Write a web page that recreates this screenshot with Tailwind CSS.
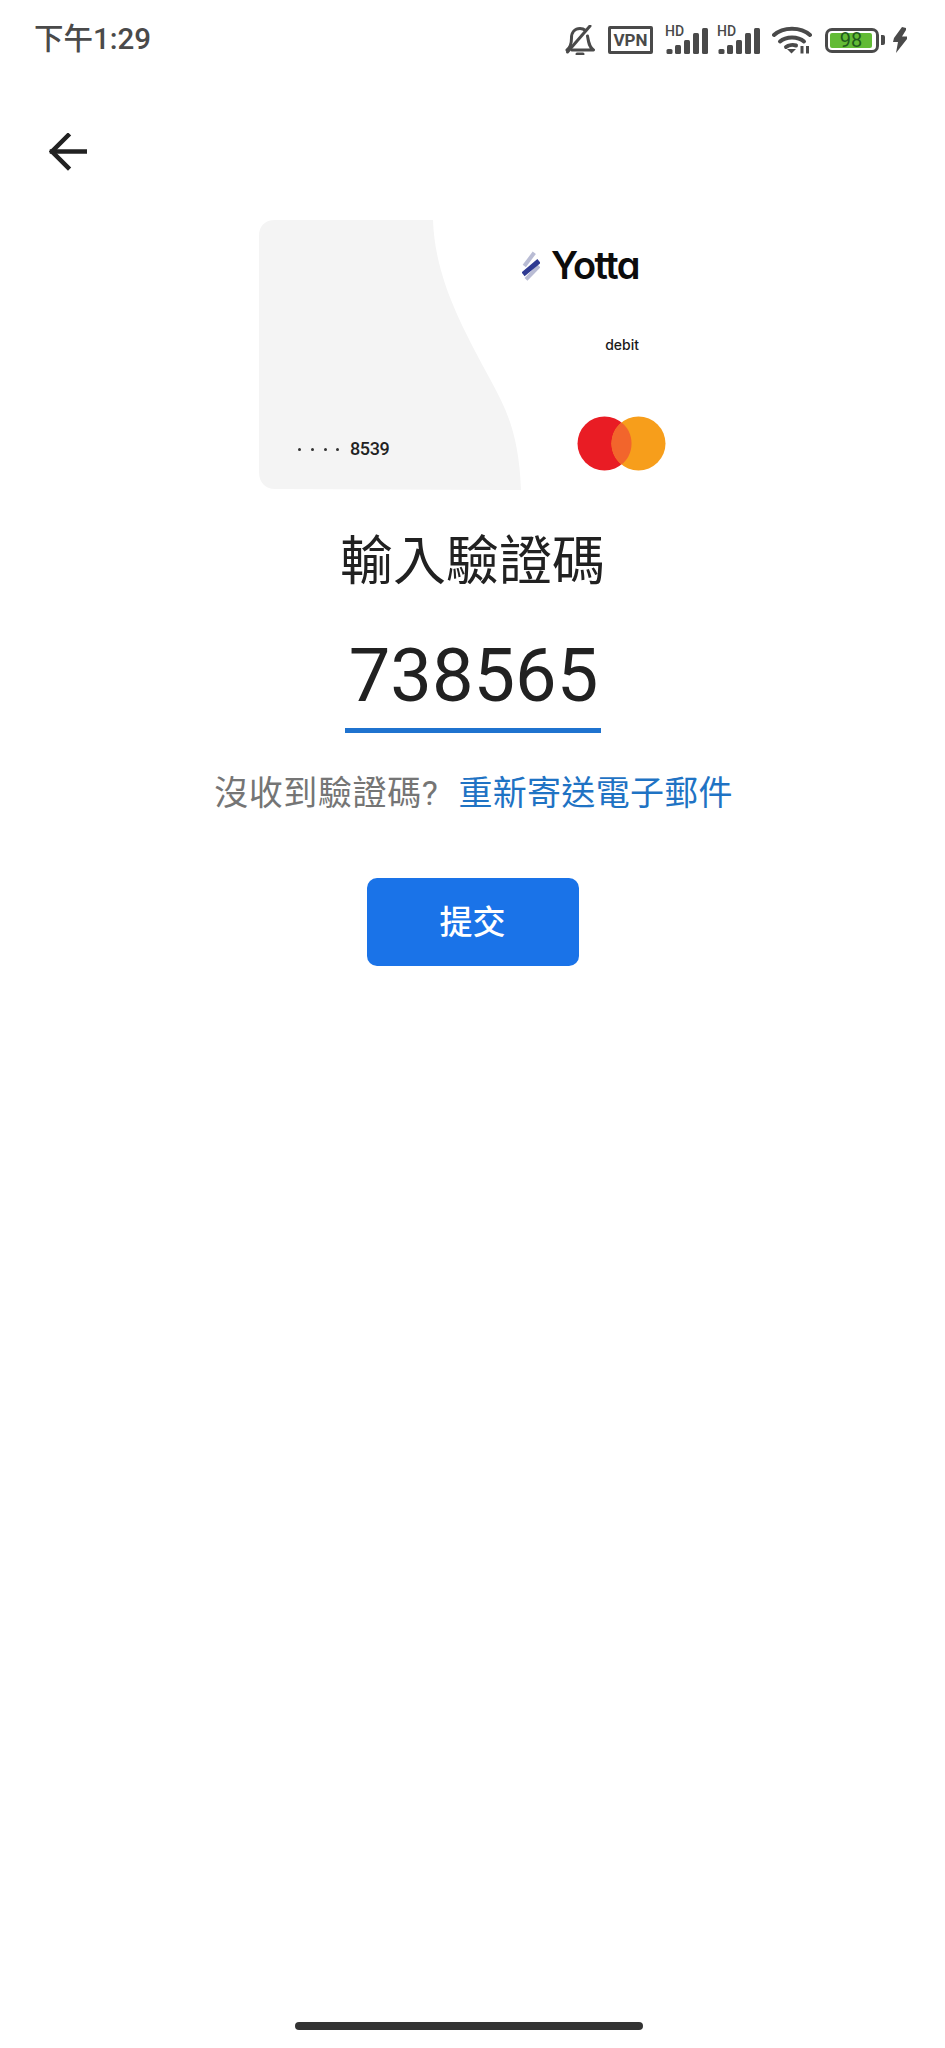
<!DOCTYPE html>
<html lang="zh-Hant">
<head>
    <meta charset="UTF-8">
    <meta name="viewport" content="width=device-width, initial-scale=1.0">
    <title>輸入驗證碼</title>
    <script src="https://cdn.jsdelivr.net/npm/@tailwindcss/browser@4"></script>
</head>
<body class="bg-white">
    <div class="flex flex-col h-[2048px] font-['Roboto','Noto_Sans_CJK_TC',sans-serif]">
        <!-- Status bar -->
        <header class="flex justify-between items-center h-[80px] pl-[34px] pr-[38px] text-[#4a4a4a]">
            <span class="text-[29.500px] leading-none font-medium">下午1:29</span>
            <div class="flex items-center">
                <!-- muted bell -->
                <svg class="w-[30px] h-[30px]" viewBox="0 0 30 30" fill="none" stroke="#4a4a4a" stroke-width="3" stroke-linecap="round" stroke-linejoin="round">
                    <path d="M2 25 C6 22 6.500 18 6.500 13 C6.500 7 10 3.500 15 3.500 C17 3.500 19 4.200 20.500 5.500"/>
                    <path d="M22.500 11 C23.500 17 24 22 28.500 25 H7"/>
                    <path d="M2.500 27 L25 1"/>
                    <path d="M12 29 H18"/>
                </svg>
                <!-- VPN -->
                <div class="ml-[13px] flex items-center justify-center w-[45px] h-[28px] border-[3px] border-[#4a4a4a] rounded-[2px] text-[17px] font-bold leading-none">VPN</div>
                <!-- signal 1 -->
                <div class="relative ml-[12px] w-[43px] h-[28px]">
                    <span class="absolute left-0 top-0 text-[14px] font-medium leading-[11px]">HD</span>
                    <svg class="w-[43px] h-[28px]" viewBox="0 0 43 28" fill="#4a4a4a">
                        <rect x="1.500" y="23" width="6" height="5" rx="1.500"/>
                        <rect x="10" y="19" width="6" height="9" rx="1.500"/>
                        <rect x="19" y="14" width="6" height="14" rx="1.500"/>
                        <rect x="28" y="7" width="6" height="21" rx="1.500"/>
                        <rect x="37" y="2" width="6" height="26" rx="1.500"/>
                    </svg>
                </div>
                <!-- signal 2 -->
                <div class="relative ml-[9px] w-[43px] h-[28px]">
                    <span class="absolute left-0 top-0 text-[14px] font-medium leading-[11px]">HD</span>
                    <svg class="w-[43px] h-[28px]" viewBox="0 0 43 28" fill="#4a4a4a">
                        <rect x="1.500" y="23" width="6" height="5" rx="1.500"/>
                        <rect x="10" y="19" width="6" height="9" rx="1.500"/>
                        <rect x="19" y="14" width="6" height="14" rx="1.500"/>
                        <rect x="28" y="7" width="6" height="21" rx="1.500"/>
                        <rect x="37" y="2" width="6" height="26" rx="1.500"/>
                    </svg>
                </div>
                <!-- wifi -->
                <svg class="ml-[12px] w-[40px] h-[28px]" viewBox="0 0 40 28" fill="none" stroke="#4a4a4a" stroke-width="4" stroke-linecap="round">
                    <path d="M2 9 C11 0.500 29 0.500 38 9"/>
                    <path d="M8 15.500 C14 10 26 10 32 15.500"/>
                    <path d="M14 21 C16.500 19 21 18.500 24 19.500"/>
                    <path d="M15 23 L19.500 27.500 L24 23 Z" fill="#4a4a4a" stroke="none"/>
                    <path d="M30 20 V27.500 M35.500 20 V27.500" stroke-width="3" stroke-linecap="butt"/>
                </svg>
                <!-- battery -->
                <div class="ml-[13px] flex items-center">
                    <div class="w-[54px] h-[25px] border-[3px] border-[#4a4a4a] rounded-[7px] p-[2px]">
                        <div class="flex items-center justify-center h-full w-[42px] bg-[#62bb35] rounded-[2px] text-[20px] leading-none text-[#1f5a1c]">98</div>
                    </div>
                    <div class="ml-[2px] w-[4px] h-[10px] bg-[#4a4a4a] rounded-r-[2px]"></div>
                </div>
                <!-- bolt -->
                <svg class="ml-[8px] w-[14px] h-[26px]" viewBox="0 0 14 26" fill="#4a4a4a">
                    <path d="M9 0 L1 11 L0 15 H5 L3 26 L14 12 V9.500 H9 L13 3 V1 Z"/>
                </svg>
            </div>
        </header>

        <!-- Back arrow -->
        <div class="pt-[53px] pl-[49px]">
            <svg class="w-[38px] h-[38px]" viewBox="0 0 38 38" fill="none" stroke="#212121" stroke-width="4.500" stroke-linecap="square" stroke-linejoin="miter">
                <path d="M36 18.500 H3"/>
                <path d="M19 2.500 L3 18.500 L19 34.500"/>
            </svg>
        </div>

        <!-- Main -->
        <main class="flex flex-col items-center">
            <!-- Card art -->
            <div class="relative mt-[49px] w-[429px] h-[270px]">
                <svg class="absolute left-[1px] top-0 w-[262px] h-[270px]" viewBox="0 0 262 270" fill="#f4f4f4">
                    <path d="M16 0 H174 C176 60 205 110 231 159 C248 190 260 215 262 270 L16 269 C6 269 0 262 0 252 V16 C0 6 6 0 16 0 Z"/>
                </svg>
                <!-- Yotta logo -->
                <svg class="absolute left-[264px] top-[31px] w-[18px] h-[30px]" viewBox="0 0 18 30" fill="none">
                    <path d="M12.300 1.700 L2.300 15" stroke="#b9bcd4" stroke-width="4"/>
                    <path d="M17 15 L4 28.300" stroke="#b9bcd4" stroke-width="4"/>
                    <path d="M17 10 L1 23.300" stroke="#2f3a92" stroke-width="5"/>
                </svg>
                <span class="absolute right-[48px] top-[22px] text-[38px] leading-[46px] font-semibold tracking-[-1.5px] text-[#0c0c0c] font-['Inter'] [font-feature-settings:'cv11']">Yotta</span>
                <span class="absolute right-[48px] top-[115px] text-[14px] leading-[20px] font-medium text-[#1a1a1a] font-['Inter']">debit</span>
                <!-- masked number -->
                <div class="absolute left-[40px] top-[219px] flex items-center h-[20px] text-[#222]">
                    <span class="w-[3px] h-[3px] rounded-full bg-[#333]"></span>
                    <span class="ml-[10px] w-[3px] h-[3px] rounded-full bg-[#333]"></span>
                    <span class="ml-[10px] w-[3px] h-[3px] rounded-full bg-[#333]"></span>
                    <span class="ml-[9px] w-[3px] h-[3px] rounded-full bg-[#333]"></span>
                    <span class="ml-[11px] text-[18px] leading-none font-medium tracking-[-0.4px] font-['Roboto']">8539</span>
                </div>
                <!-- Mastercard -->
                <svg class="absolute left-[319px] top-[196px] w-[90px] h-[55px]" viewBox="0 0 90 55">
                    <circle cx="27.500" cy="27.500" r="27" fill="#e91c24"/>
                    <circle cx="61.500" cy="27.500" r="27" fill="#f79e1b"/>
                    <path d="M44.500 6.500 C51 11.500 54.500 19 54.500 27.500 C54.500 36 51 43.500 44.500 48.500 C38 43.500 34.500 36 34.500 27.500 C34.500 19 38 11.500 44.500 6.500 Z" fill="#f2652c"/>
                </svg>
            </div>

            <h1 class="mt-[42px] text-[53px] leading-[60px] font-normal text-[#212121]">輸入驗證碼</h1>

            <!-- Code input -->
            <div class="mt-[44px] pl-[2px] text-[74px] leading-[80px] text-[#212121] font-['Roboto']">738565</div>
            <div class="mt-[12px] w-[256px] h-[5px] bg-[#1f73cf]"></div>

            <p class="mt-[40px] pl-[2px] flex items-center text-[34px] leading-[40px] tracking-[0.3px] whitespace-nowrap">
                <span class="text-[#757575] tracking-[0.6px]">沒收到驗證碼?</span>
                <a href="#" class="ml-[20px] text-[#1f73c4]">重新寄送電子郵件</a>
            </p>

            <button class="mt-[65px] w-[212px] h-[88px] pt-[2px] bg-[#1a73e8] rounded-[10px] text-white text-[33px] font-medium">提交</button>
        </main>

        <!-- Home indicator -->
        <div class="mt-auto mb-[18px] ml-[295px] w-[348px] h-[8px] rounded-full bg-[#333]"></div>
    </div>
</body>
</html>
